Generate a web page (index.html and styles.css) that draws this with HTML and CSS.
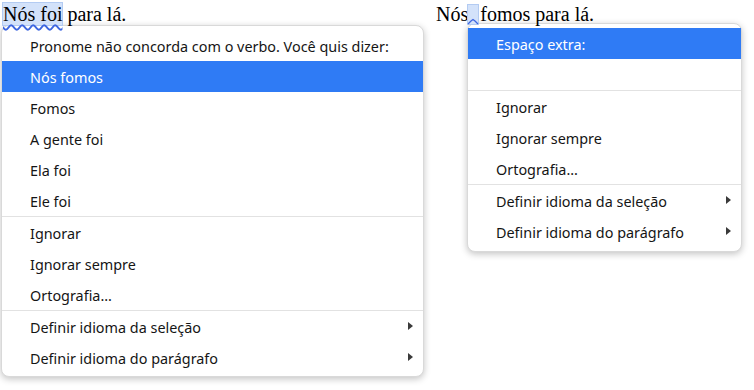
FILE: index.html
```html
<!DOCTYPE html>
<html lang="pt">
<head>
<meta charset="utf-8">
<link rel="stylesheet" href="styles.css">
</head>
<body>
<div class="stage">
  <div class="scene scene-left">
    <div class="line"><span class="err">Nós foi</span> para lá.</div>
    <div class="menu menu-left">
      <div class="item">Pronome não concorda com o verbo. Você quis dizer:</div>
      <div class="item active">Nós fomos</div>
      <div class="item">Fomos</div>
      <div class="item">A gente foi</div>
      <div class="item">Ela foi</div>
      <div class="item">Ele foi</div>
      <div class="sep"></div>
      <div class="item">Ignorar</div>
      <div class="item">Ignorar sempre</div>
      <div class="item">Ortografia...</div>
      <div class="sep"></div>
      <div class="item sub">Definir idioma da seleção</div>
      <div class="item sub">Definir idioma do parágrafo</div>
    </div>
  </div>
  <div class="scene scene-right">
    <div class="line">Nós<svg class="space-err" width="12" height="21" viewBox="0 0 12 21"><rect x="0" y="0" width="12" height="21" fill="#d3e2fa"/><rect x="0.5" y="0.5" width="11" height="20" fill="none" stroke="#b3cbf2"/><path d="M1 20 L4 17 L6 15.5 L8 17 L11 20" fill="none" stroke="#3d66e0" stroke-width="1.3"/></svg>fomos para lá.</div>
    <div class="menu menu-right">
      <div class="item active">Espaço extra:</div>
      <div class="item"></div>
      <div class="sep"></div>
      <div class="item">Ignorar</div>
      <div class="item">Ignorar sempre</div>
      <div class="item">Ortografia...</div>
      <div class="sep"></div>
      <div class="item sub">Definir idioma da seleção</div>
      <div class="item sub">Definir idioma do parágrafo</div>
    </div>
  </div>
</div>
</body>
</html>
```
FILE: styles.css
```css
html, body {
  margin: 0;
  padding: 0;
  background: #ffffff;
}
.stage {
  display: flex;
  width: 754px;
  height: 390px;
  overflow: hidden;
}
.scene-left {
  width: 436px;
  flex: none;
}
.scene-right {
  flex: 1;
}
.line {
  height: 23px;
  padding-top: 3px;
  box-sizing: border-box;
  line-height: 22px;
  font-family: "Liberation Serif", serif;
  font-size: 20px;
  color: #000;
  white-space: nowrap;
}
.scene-left .line {
  padding-left: 3px;
}
.err {
  background: #d3e2fa;
  box-shadow: 0 0 0 1px #b3cbf2;
  text-decoration: underline wavy #3d66e0;
  text-decoration-thickness: 1.5px;
  text-underline-offset: 3px;
  text-decoration-skip-ink: none;
}
.space-err {
  display: inline-block;
  vertical-align: -4px;
  margin-left: -1px;
  margin-right: 1px;
}
.menu {
  background: #fff;
  border: 1px solid #d9d9d9;
  border-radius: 8px;
  box-shadow: 0 2px 7px rgba(0, 0, 0, 0.24);
  padding: 4px 0 3px;
  font-family: "Noto Sans", sans-serif;
  font-size: 14.4px;
  color: #151515;
  box-sizing: border-box;
}
.menu-left {
  margin-top: 2px;
  margin-left: 1px;
  width: 423px;
}
.menu-right {
  margin-top: 0;
  margin-left: 31px;
  width: 275px;
  padding-bottom: 4px;
}
.item {
  position: relative;
  height: 31px;
  box-sizing: border-box;
  padding-top: 3px;
  line-height: 28px;
  padding-left: 28px;
  white-space: nowrap;
}
.item.active {
  background: #2f7bf5;
  color: #fff;
}
.item.sub::after {
  content: "";
  position: absolute;
  right: 10px;
  top: 11px;
  width: 0;
  height: 0;
  border-top: 4.5px solid transparent;
  border-bottom: 4.5px solid transparent;
  border-left: 5px solid #3a3a3a;
}
.sep {
  height: 1px;
  background: #e2e2e2;
}
```
